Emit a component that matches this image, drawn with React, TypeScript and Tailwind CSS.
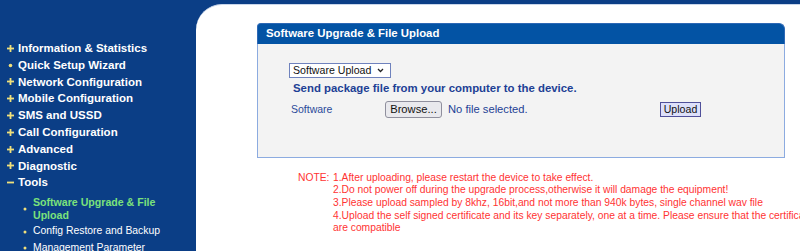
import React from "react";

const Plus = () => (
  <svg width="7" height="7" viewBox="0 0 7 7" className="shrink-0">
    <rect x="0" y="2.6" width="7" height="1.8" fill="#f1e07a" />
    <rect x="2.6" y="0" width="1.8" height="7" fill="#f1e07a" />
  </svg>
);
const Dot = () => (
  <svg width="7" height="7" viewBox="0 0 7 7" className="shrink-0">
    <circle cx="3.5" cy="3.5" r="1.8" fill="#f1e07a" />
  </svg>
);
const Minus = () => (
  <svg width="7" height="7" viewBox="0 0 7 7" className="shrink-0">
    <rect x="0" y="2.6" width="7" height="1.8" fill="#f1e07a" />
  </svg>
);

const main = [
  { t: "Information & Statistics", i: "plus" },
  { t: "Quick Setup Wizard", i: "dot" },
  { t: "Network Configuration", i: "plus" },
  { t: "Mobile Configuration", i: "plus" },
  { t: "SMS and USSD", i: "plus" },
  { t: "Call Configuration", i: "plus" },
  { t: "Advanced", i: "plus" },
  { t: "Diagnostic", i: "plus" },
  { t: "Tools", i: "minus" },
];

export default function App() {
  return (
    <div
      className="w-[800px] h-[251px] bg-[#0b3e86] flex overflow-hidden"
      style={{ fontFamily: '"Liberation Sans", Arial, sans-serif' }}
    >
      <aside className="w-[196px] shrink-0 pt-[40px]">
        {main.map((m) => (
          <div key={m.t} className="flex items-center h-[16.8px] pl-[7px] gap-[4px]">
            {m.i === "plus" ? <Plus /> : m.i === "dot" ? <Dot /> : <Minus />}
            <span className="text-white font-bold text-[11.5px] leading-[16.8px] whitespace-nowrap">{m.t}</span>
          </div>
        ))}
        <div className="mt-[3.3px] pl-[23px]">
          <div className="flex items-center py-[2px] gap-[6px]">
            <svg width="4" height="4" viewBox="0 0 4 4" className="shrink-0">
              <circle cx="2" cy="2" r="1.5" fill="#f1e07a" />
            </svg>
            <span className="text-[#7be27b] font-bold text-[10.6px] leading-[12.5px]">
              Software Upgrade &amp; File
              <br />
              Upload
            </span>
          </div>
          {["Config Restore and Backup", "Management Parameter"].map((s) => (
            <div key={s} className="flex items-center py-[2px] gap-[6px]">
              <svg width="4" height="4" viewBox="0 0 4 4" className="shrink-0">
                <circle cx="2" cy="2" r="1.5" fill="#f1e07a" />
              </svg>
              <span className="text-white text-[10.4px] leading-[12.5px] whitespace-nowrap">{s}</span>
            </div>
          ))}
        </div>
      </aside>
      <main className="flex-1 mt-[4px] bg-white rounded-tl-[26px] pl-[61px] pt-[18px] overflow-hidden border-t border-[#c9d6ea]">
        <div className="w-[528px]">
          <div className="h-[21px] bg-[#0353a4] rounded-tl-[4px] rounded-tr-[6px] flex items-center pl-[8px] border border-b-0 border-[#2d68b5]">
            <span className="text-white font-bold text-[11.4px]">Software Upgrade &amp; File Upload</span>
          </div>
          <div className="bg-[#f3f3f3] border border-t-0 border-[#8cabe0] h-[114px] pl-[31px] pt-[19px]">
            <div className="w-[102px] h-[15px] bg-white border border-[#6f82bd] flex items-center justify-between pl-[3px] pr-[6px]">
              <span className="text-[#111] text-[10.6px] leading-none">Software Upload</span>
              <svg width="7" height="5" viewBox="0 0 7 5">
                <path d="M1 1 L3.5 3.5 L6 1" stroke="#222" strokeWidth="1.3" fill="none" />
              </svg>
            </div>
            <div className="mt-[3px] h-[14px] pl-[4px] text-[#1d3f95] font-bold text-[11.4px] leading-[14px] whitespace-nowrap">
              Send package file from your computer to the device.
            </div>
            <div className="mt-[6px] flex items-center h-[17px]">
              <span className="w-[96px] shrink-0 pl-[2px] text-[#2b4a9a] text-[10.5px]">Software</span>
              <div className="w-[275px] shrink-0 flex items-center">
                <span className="h-[17px] w-[57px] bg-[#e9e9ed] border border-[#8f8f9d] rounded-[3px] flex items-center justify-center text-[#111] text-[11.2px]">
                  Browse...
                </span>
                <span className="ml-[6px] text-[#1d3f95] text-[11.2px]">No file selected.</span>
              </div>
              <span className="h-[15px] w-[41px] bg-[#dde0fa] border border-[#50509a] flex items-center justify-center text-[#111] text-[10.6px]">
                Upload
              </span>
            </div>
          </div>
        </div>
        <div className="mt-[13.5px] flex text-[#ff3333] text-[10.3px] leading-[12.7px] whitespace-nowrap">
          <span className="ml-[41px] w-[35px] shrink-0">NOTE:</span>
          <div>
            <div>1.After uploading, please restart the device to take effect.</div>
            <div>2.Do not power off during the upgrade process,otherwise it will damage the equipment!</div>
            <div>3.Please upload sampled by 8khz, 16bit,and not more than 940k bytes, single channel wav file</div>
            <div>4.Upload the self signed certificate and its key separately, one at a time. Please ensure that the certificate and key</div>
            <div>are compatible</div>
          </div>
        </div>
      </main>
    </div>
  );
}
